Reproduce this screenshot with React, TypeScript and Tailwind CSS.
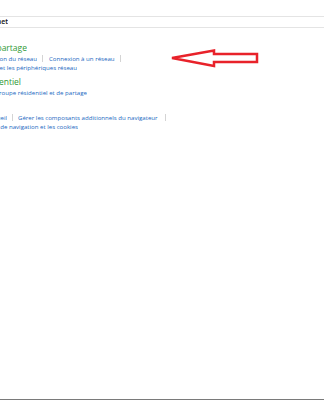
import React from 'react';

// Clipped text: only the tail of the string shows, ending at the box's right edge
function Tail({ width, text, className = '' }: { width: string; text: string; className?: string }) {
  return (
    <span className={`flex justify-end overflow-hidden whitespace-nowrap shrink-0 ${width} ${className}`}>
      <span className="shrink-0">{text}</span>
    </span>
  );
}

function Sep({ className = '' }: { className?: string }) {
  return <span className={`block w-px h-[7px] bg-[#d4d4d4] shrink-0 ${className}`} />;
}

export default function App() {
  return (
    <div
      className="relative w-[324px] h-[400px] overflow-hidden bg-white flex flex-col"
      style={{ fontFamily: '"Open Sans", "Noto Sans", sans-serif' }}
    >
      {/* address bar */}
      <div className="mt-[16px] h-[12px] border-y border-[#e4e4e4] flex items-center">
        <Tail width="w-[8px]" text="Réseau et Internet" className="text-[7px] leading-[10px] text-[#111] font-semibold" />
      </div>

      <div className="flex flex-col text-[#2167c1] text-[6.1px] leading-[9px]">
        {/* Centre Réseau et partage */}
        <div className="mt-[14px] h-[11px] flex items-end">
          <Tail width="w-[27px]" text="Centre Réseau et partage" className="text-[8.5px] leading-[11px] text-[#2f9a36]" />
        </div>
        <div className="mt-[1px] h-[9px] flex items-center">
          <Tail width="w-[37px]" text="Afficher l'état et la gestion du réseau" />
          <Sep className="ml-[5px]" />
          <span className="ml-[6px] whitespace-nowrap">Connexion à un réseau</span>
          <Sep className="ml-[5px]" />
        </div>
        <div className="h-[9px] flex items-center">
          <Tail width="w-[77px]" text="Afficher les ordinateurs et les périphériques réseau" />
        </div>

        {/* Groupe résidentiel */}
        <div className="mt-[4px] h-[11px] flex items-end">
          <Tail width="w-[21px]" text="Groupe résidentiel" className="text-[8.5px] leading-[11px] text-[#2f9a36]" />
        </div>
        <div className="mt-[1px] h-[9px] flex items-center">
          <Tail width="w-[87px]" text="Choisir les options de groupe résidentiel et de partage" />
        </div>

        {/* Options Internet */}
        <div className="mt-[4px] h-[11px] flex items-end">
          <Tail width="w-0" text="Options Internet" className="text-[8.5px] leading-[11px] text-[#2f9a36]" />
        </div>
        <div className="mt-[1px] h-[9px] flex items-center">
          <Tail width="w-[7px]" text="Modifier votre page d'accueil" />
          <Sep className="ml-[5px]" />
          <span className="ml-[5px] whitespace-nowrap">Gérer les composants additionnels du navigateur</span>
          <Sep className="ml-[7px]" />
        </div>
        <div className="h-[9.5px] flex items-center">
          <Tail width="w-[78px]" text="Supprimer l'historique de navigation et les cookies" />
        </div>
      </div>

      <div className="mt-auto h-px bg-[#7a7a7a]" />

      {/* red annotation arrow */}
      <svg className="absolute left-0 top-0" width="324" height="400" viewBox="0 0 324 400">
        <polygon
          points="172,58 214,50.5 214,54 257,54 257,62 214,62 214,66"
          fill="white"
          stroke="#e8222a"
          strokeWidth="2.5"
          strokeLinejoin="miter"
        />
      </svg>
    </div>
  );
}
